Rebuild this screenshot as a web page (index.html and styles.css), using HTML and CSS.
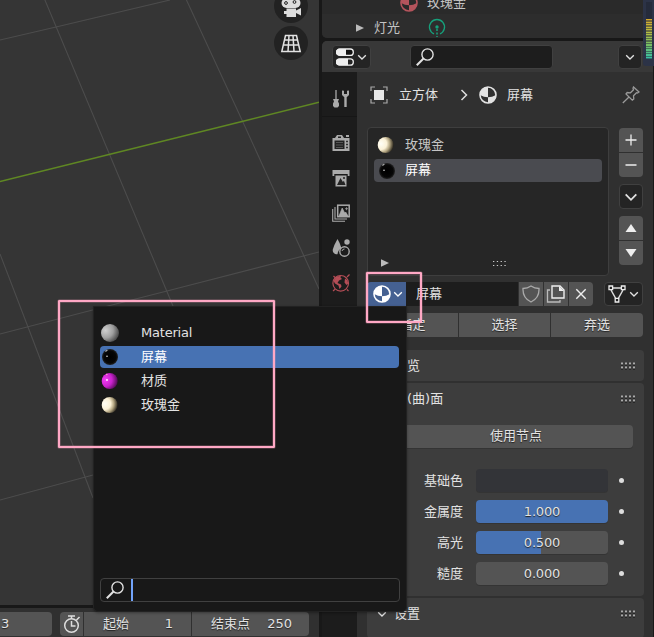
FILE: index.html
```html
<!DOCTYPE html>
<html lang="zh-CN">
<head>
<meta charset="utf-8">
<title>材质属性</title>
<link rel="stylesheet" href="styles.css">
</head>
<body>
<svg class="defs" aria-hidden="true">
  <defs>
    <radialGradient id="g-gold" cx=".2" cy=".42" r=".8"><stop offset="0" stop-color="#fffef6"/><stop offset=".45" stop-color="#fbf1d6"/><stop offset=".7" stop-color="#b3a581"/><stop offset="1" stop-color="#29251c"/></radialGradient>
    <radialGradient id="g-gray" cx=".25" cy=".35" r=".85"><stop offset="0" stop-color="#cfcfcf"/><stop offset=".5" stop-color="#a0a0a0"/><stop offset="1" stop-color="#333"/></radialGradient>
    <radialGradient id="g-pink" cx=".22" cy=".42" r=".85"><stop offset="0" stop-color="#f23df4"/><stop offset=".5" stop-color="#c922cd"/><stop offset="1" stop-color="#350638"/></radialGradient>
    <radialGradient id="g-black"><stop offset="0" stop-color="#000"/><stop offset=".75" stop-color="#060606"/><stop offset="1" stop-color="#222"/></radialGradient>
    <symbol id="gold" viewBox="0 0 18 18"><circle cx="8.700" cy="9" r="8" fill="url(#g-gold)"/></symbol>
    <symbol id="gray" viewBox="0 0 18 18"><circle cx="9" cy="9" r="9" fill="url(#g-gray)"/></symbol>
    <symbol id="pink" viewBox="0 0 18 18"><circle cx="8.700" cy="9" r="8" fill="url(#g-pink)"/><circle cx="6" cy="8" r=".9" fill="#fff"/><circle cx="5.800" cy="2.500" r=".8" fill="#f9c"/></symbol>
    <symbol id="black" viewBox="0 0 18 18"><circle cx="9" cy="9" r="8" fill="url(#g-black)"/><circle cx="6" cy="8.300" r=".8" fill="#ddd"/><path d="M4.400 3.400 6.400 2" stroke="#aaa" stroke-width="1.200"/></symbol>
    <symbol id="material" viewBox="0 0 18 18"><circle cx="9" cy="9" r="8" fill="none" stroke="currentColor" stroke-width="1.600"/><path d="M9 1a8 8 0 0 0-8 8q4 2.300 8 2.300zM9 11.300q4 0 8-2.300a8 8 0 0 1-8 8z" fill="currentColor"/></symbol>
    <symbol id="down" viewBox="0 0 10 10"><path d="m1.200 3.200 3.800 3.800 3.800-3.800" fill="none" stroke="currentColor" stroke-width="1.300"/></symbol>
    <symbol id="search" viewBox="0 0 18 18"><circle cx="11.500" cy="6.500" r="5.600" fill="none" stroke="currentColor" stroke-width="1.400"/><path d="M7.500 10.500.8 17.200" stroke="currentColor" stroke-width="2"/></symbol>
    <symbol id="grip" viewBox="0 0 16 8"><path d="M1 2.500h14M1 6.500h14" stroke="#111" stroke-width="2" stroke-dasharray="2 2"/><path d="M1 1.500h14M1 5.500h14" stroke="#aaa" stroke-width="2" stroke-dasharray="2 2"/></symbol>
    <symbol id="play" viewBox="0 0 8 8"><path d="M0 .3 8 4 0 7.700z" fill="#bbb"/></symbol>
  </defs>
</svg>

<div class="app">
  <main class="left">
    <section class="viewport">
      <svg class="scene" viewBox="0 0 319 605">
        <g stroke="#4c4c4c" stroke-width="1.100" fill="none">
          <path d="M44.500-1 173 306M186-1 242 120 319 289M0 254 28 327 93 498M0 40 56 27 170 0M0 500 93 475M0 334 108 306 167 291 319 252"/>
        </g>
        <path d="M0 181.500 110 154.300 242 121.500 319 102.300" stroke="#5f8723" stroke-width="1.500" fill="none"/>
      </svg>
      <div class="gizmos">
        <span class="gizmo"><svg width="22" height="26" viewBox="0 0 22 26"><rect x="1.500" y="5" width="19" height="10" rx="5" fill="#ddd"/><circle cx="6" cy="10" r="1.400" fill="#ddd" stroke="#222"/><circle cx="14.500" cy="9" r="1.400" fill="#ddd" stroke="#222"/><path d="M6.500 15.500h9.500v2l5-2.500v7.500L16 20v4H6.500v-3H4v-3h2.500z" fill="#ddd"/></svg></span>
        <span class="gizmo"><svg width="22" height="20" viewBox="0 0 22 20"><path d="M5.500 2.500h11l3.700 16H1.800zM4.500 7h13M3.300 12h15.400M9 2.500l-1 16M13 2.500l1 16" fill="none" stroke="#e2e2e2" stroke-width="1.500"/></svg></span>
      </div>
    </section>
    <footer class="timeline">
      <span class="num first">3</span>
      <div class="group">
        <span class="num clock"><svg width="18" height="20" viewBox="0 0 18 20"><circle cx="8.500" cy="11.500" r="6.800" fill="none" stroke="#ddd" stroke-width="1.500"/><path d="M5 2h7M8.500 2v3M13.500 6l3-3M8.500 7v5h4" fill="none" stroke="#ddd" stroke-width="1.500"/></svg></span>
        <span class="num start"><b>起始</b><b>1</b></span>
        <span class="num end"><b>结束点</b><b>250</b></span>
      </div>
    </footer>
  </main>

  <aside class="right">
    <section class="outliner">
      <div class="orow child"><svg width="18" height="18" class="red"><use href="#material"/></svg><span>玫瑰金</span></div>
      <div class="orow"><svg width="8" height="8"><use href="#play"/></svg><span class="light-name">灯光</span><svg width="18" height="20" viewBox="0 0 18 20"><path d="M6 15.900a7.500 7.500 0 1 1 6 0" fill="none" stroke="#16a07b" stroke-width="1.400"/><circle cx="9" cy="9" r="1.700" fill="#16a07b"/><path d="M9 11v8" stroke="#16a07b" stroke-width="1.500" stroke-dasharray="2 1.500"/></svg></div>
    </section>

    <section class="properties">
      <header class="pheader">
        <span class="dark editor"><svg width="18" height="18" viewBox="0 0 18 18"><rect x=".7" y="1" width="16.600" height="6.400" rx="3" fill="#111" stroke="#eee" stroke-width="1.300"/><path d="M3 1h7v6.400H3a3 3 0 0 1 0-6.400zM3 10.800h9v6.400H3a3 3 0 0 1 0-6.400z" fill="#eee"/><rect x=".7" y="10.800" width="16.600" height="6.400" rx="3" fill="none" stroke="#eee" stroke-width="1.300"/></svg><svg width="10" height="10"><use href="#down"/></svg></span>
        <span class="find"><svg width="18" height="18"><use href="#search"/></svg></span>
        <span class="dark options"><svg width="10" height="10"><use href="#down"/></svg></span>
      </header>
      <div class="pbody">
        <nav class="tabs">
          <span class="tab tool"><svg width="18" height="20" viewBox="0 0 18 20"><path d="M4 1v9" stroke="#aaa" stroke-width="1.300"/><path d="M1 10h6l-1 2.500 1 2v2.500l-1.500 1.500h-3L1 17v-2.500l1-2z" fill="#aaa"/><path d="M12.300 18V8.300L10 6V1.500l2 .3V5h3V1.800l2-.3V6l-2.300 2.300V18z" fill="#aaa"/></svg></span>
          <span class="tab"><svg width="18" height="18" viewBox="0 0 18 18"><path d="M3 4 5 1h5l2 3h5.500v13H.5V4z" fill="#aaa"/><path d="M2.500 6.500h10v8.500h-10zM6 2.500h3V4H6z" fill="#222"/><path d="M4 8.500h7M4 11h7M4 13.500h7" stroke="#555"/><path d="M14 7.500h2M14 10.500h2M14 13.500h2" stroke="#333" stroke-width="1.500"/><path d="M14 2h3" stroke="#aaa" stroke-width="2"/></svg></span>
          <span class="tab"><svg width="18" height="18" viewBox="0 0 18 18"><path d="M.5 1h17v6h-1.800V5H2.300v2H.5zM3.500 6.500h11v11h-11z" fill="#aaa"/><path d="m5 16 3.500-7 2.400 4 1-1.300L13.500 16z" fill="#242424"/><circle cx="12" cy="9" r="1" fill="#242424"/></svg></span>
          <span class="tab"><svg width="18" height="18" viewBox="0 0 18 18"><path d="M.7 5v12.300H13M3 3v12h12" fill="none" stroke="#aaa" stroke-width="1.100"/><rect x="5.700" y="1.200" width="11.500" height="11.500" fill="none" stroke="#aaa" stroke-width="1.500"/><path d="m7 12 3.200-8 2.500 5 1-1L16 12zM13 4.700h3M14.500 3.200v3" fill="#aaa" stroke="#aaa" stroke-width=".7"/></svg></span>
          <span class="tab"><svg width="18" height="18" viewBox="0 0 18 18"><path d="M5.500 0Q2 6 .8 10.500c-.5 3 2 5 4.700 4.700.3-3 1.700-5 4-6Q8 4 5.500 0z" fill="#aaa"/><circle cx="15" cy="3" r="2.700" fill="#aaa"/><circle cx="12.500" cy="12.500" r="4.700" fill="none" stroke="#aaa" stroke-width="1.400"/><path d="M10 12a2.500 2.500 0 0 1 2.500-2" fill="none" stroke="#aaa"/></svg></span>
          <span class="tab"><svg width="18" height="18" viewBox="0 0 18 18"><circle cx="8.700" cy="9.300" r="7.800" fill="none" stroke="#b44d56" stroke-width="1.200"/><path d="M1.500 7 4 3l5-1.500-.5 2L10 5 7 6.500 5.500 9 9 10.500l.5 2-2 2.500-1-3.500L3 9.500zM13 4.500l2.500 2 .7 3-1.700 1.500-2-2.500z" fill="#b44d56"/><path d="m15 3 2.500-2.500M1 17l2-1.800M15 15.500l1.500 1.500M1.500 2l1.500 1.500" stroke="#b44d56" stroke-width="1.200"/></svg></span>
        </nav>

        <div class="content">
          <div class="crumbs">
            <svg width="18" height="18" viewBox="0 0 18 18"><rect x="4" y="4" width="10" height="10" fill="#e8e8e8"/><path d="M1 5V1h4M13 1h4v4M17 13v4h-4M5 17H1v-4" fill="none" stroke="#aaa" stroke-width="1.200"/></svg>
            <span class="object">立方体</span>
            <svg width="8" height="14" viewBox="0 0 8 14"><path d="m1.500 2 5 5-5 5" fill="none" stroke="#ddd" stroke-width="1.500"/></svg>
            <svg class="mat" width="18" height="18"><use href="#material"/></svg>
            <span>屏幕</span>
            <svg class="pin" width="18" height="18" viewBox="0 0 18 18"><path d="m11.500 1 5.500 5-1.500 1-1-.3-3 3 .3 3.300-1.500 1.200L4 8l1.200-1.500 3.300.3 3-3-.5-1.500zM7 11 .8 17" fill="none" stroke="#999" stroke-width="1.300"/></svg>
          </div>

          <div class="slots">
            <div class="list">
              <div class="slot"><svg width="18" height="18"><use href="#gold"/></svg><span>玫瑰金</span></div>
              <div class="slot selected"><svg width="18" height="18"><use href="#black"/></svg><span>屏幕</span></div>
              <div class="listfoot"><svg width="8" height="8"><use href="#play"/></svg><svg width="13" height="7" viewBox="0 0 13 7"><path d="M0 1.500h14M0 5.500h14" stroke="#ccc" stroke-width="1.200" stroke-dasharray="1.300 2.500"/></svg></div>
            </div>
            <div class="sidebtns">
              <div class="stack"><span><svg width="14" height="14" viewBox="0 0 14 14"><path d="M1.500 7h11M7 1.500v11" stroke="#eee" stroke-width="1.300"/></svg></span><span><svg width="14" height="14" viewBox="0 0 14 14"><path d="M1.500 7h11" stroke="#eee" stroke-width="1.300"/></svg></span></div>
              <span class="dark more"><svg width="14" height="14"><use href="#down"/></svg></span>
              <div class="stack"><span><svg width="12" height="8" viewBox="0 0 12 8"><path d="m6 0 5.500 8H.5z" fill="#eee"/></svg></span><span><svg width="12" height="8" viewBox="0 0 12 8"><path d="m6 8 5.500-8H.5z" fill="#eee"/></svg></span></div>
            </div>
          </div>

          <div class="datablock">
            <span class="browse"><svg width="18" height="18"><use href="#material"/></svg><svg width="10" height="10"><use href="#down"/></svg></span>
            <span class="name">屏幕</span>
            <span class="act"><svg width="18" height="18" viewBox="0 0 18 18"><path d="M9 1q3.500 2.500 8 2.500Q17.500 13 9 17 .5 13 1 3.500 5.500 3.500 9 1z" fill="none" stroke="#aaa" stroke-width="1.300"/></svg></span>
            <span class="act"><svg width="20" height="18" viewBox="0 0 20 18"><path d="M6 1h8l4 4v8H6z" fill="none" stroke="#eee" stroke-width="1.400"/><path d="M13 1v5h5z" fill="#eee"/><path d="M4 5H1.500v12H14v-2" fill="none" stroke="#bbb" stroke-width="1.300"/></svg></span>
            <span class="act last"><svg width="12" height="12" viewBox="0 0 12 12"><path d="m1.300 1.300 9.400 9.400M10.700 1.300l-9.400 9.400" stroke="#eee" stroke-width="1.400"/></svg></span>
            <span class="dark link"><svg width="18" height="18" viewBox="0 0 18 18"><path d="M4 3h10M3 5l5 9M15 5l-5 9" stroke="#ddd" stroke-width="1.500"/><path d="M1 1h3.600v3.600H1zM13.400 1H17v3.600h-3.600zM7.200 13.400h3.600V17H7.200z" fill="#222" stroke="#eee" stroke-width="1.300"/></svg><svg width="10" height="10"><use href="#down"/></svg></span>
          </div>

          <div class="assign"><span>指定</span><span>选择</span><span>弃选</span></div>

          <section class="panel preview"><header><svg width="10" height="10"><use href="#down"/></svg><span>预览</span><svg class="grip" width="16" height="8"><use href="#grip"/></svg></header></section>
          <section class="panel surface">
            <header><svg width="10" height="10"><use href="#down"/></svg><span>表(曲)面</span><svg class="grip" width="16" height="8"><use href="#grip"/></svg></header>
            <div class="nodes">使用节点</div>
            <div class="prop"><label>基础色</label><span class="field color"></span><i></i></div>
            <div class="prop"><label>金属度</label><span class="field full">1.000</span><i></i></div>
            <div class="prop"><label>高光</label><span class="field half">0.500</span><i></i></div>
            <div class="prop"><label>糙度</label><span class="field">0.000</span><i></i></div>
          </section>
          <section class="panel settings"><header><svg width="10" height="10"><use href="#down"/></svg><span>设置</span><svg class="grip" width="16" height="8"><use href="#grip"/></svg></header></section>
        </div>
      </div>
    </section>
  </aside>
</div>

<div class="popup">
  <div class="item"><svg width="18" height="18"><use href="#gray"/></svg><span class="latin">Material</span></div>
  <div class="item active"><svg width="18" height="18"><use href="#black"/></svg><span>屏幕</span></div>
  <div class="item"><svg width="18" height="18"><use href="#pink"/></svg><span>材质</span></div>
  <div class="item"><svg width="18" height="18"><use href="#gold"/></svg><span>玫瑰金</span></div>
  <div class="query"><svg width="18" height="18"><use href="#search"/></svg><span class="caret"></span></div>
</div>
<div class="mark mark-list"></div>
<div class="mark mark-button"></div>
<div class="meter"><span></span></div>
</body>
</html>
```
FILE: styles.css
```css
* { box-sizing: border-box; }
body {
  margin: 0; width: 654px; height: 637px; overflow: hidden; position: relative;
  background: #181818; color: #e2e2e2;
  font: 13px/20px "DejaVu Sans", "Noto Sans CJK SC", sans-serif;
}
svg { display: block; flex: none; }
span, b, label { white-space: nowrap; font-weight: normal; }
.defs { position: absolute; width: 0; height: 0; }
.app { display: grid; grid-template-columns: 319px 331px; gap: 3px; height: 637px; }
.left { display: grid; grid-template-rows: 605px 29px; gap: 3px; min-width: 0; }

.viewport { position: relative; background: #353535; overflow: hidden; }
.scene { width: 319px; height: 605px; }
.gizmos { position: absolute; left: 274px; top: -11px; display: flex; flex-direction: column; gap: 3px; }
.gizmo { width: 34px; height: 34px; border-radius: 50%; background: #222; display: flex; align-items: center; justify-content: center; }

.timeline { background: #303030; display: flex; gap: 8px; padding-top: 4px; overflow: hidden; }
.num { height: 24px; background: #545454; display: flex; align-items: center; text-shadow: 0 1px 1px #222; }
.first { width: 52px; border-radius: 0 4px 4px 0; padding-left: 1px; }
.group { display: flex; gap: 1px; }
.clock { width: 23px; border-radius: 4px 0 0 4px; justify-content: center; }
.start { width: 107px; justify-content: space-between; padding: 0 18px 0 19px; }
.end { width: 117px; justify-content: space-between; padding: 0 17px 0 19px; border-radius: 0 4px 4px 0; }

.right { display: grid; grid-template-rows: 38px 596px; gap: 3px; min-width: 0; }
.outliner { background: #2a2a2a; border-radius: 0 0 0 5px; overflow: hidden; color: #c4c4c4; display: flex; flex-direction: column; justify-content: flex-end; }
.orow { height: 24px; flex: none; display: flex; align-items: center; padding-left: 34px; background: #2d2d2d; }
.orow.child { padding-left: 78px; gap: 9px; background: #2a2a2a; padding-bottom: 0; height: 22px; }
.orow.child svg { margin-top: -1px; }
.orow:last-child { padding-top: 3px; }
.light-name { margin: 0 28px 0 10px; }
.red { color: #b4545c; }

.properties { background: #303030; border-radius: 5px 0 0; overflow: hidden; }
.pheader { height: 31px; background: #383838; display: flex; padding: 4px 11px 0 11px; }
.dark { background: #242424; border: 1px solid #404040; border-radius: 4px; display: flex; align-items: center; justify-content: center; }
.editor { width: 39px; height: 24px; gap: 3px; margin-left: -1px; }
.find { margin-left: 39px; width: 143px; height: 24px; background: #1d1d1d; border: 1px solid #404040; border-radius: 4px; padding: 2px 5px; }
.options { margin-left: auto; width: 24px; height: 24px; }
.pbody { display: grid; grid-template-columns: 35px 296px; height: 565px; }
.tabs { background: #1c1c1c; padding-top: 10px; }
.tab { height: 35px; padding-left: 2px; display: flex; align-items: center; justify-content: center; }
.tool { border-bottom: 1px solid #161616; margin-bottom: 8px; }

.content { padding-left: 10px; }
.crumbs { height: 55px; padding: 0 13px 10px 3px; display: flex; align-items: center; }
.crumbs .object { margin: 0 22px 0 11px; }
.crumbs .mat { margin: 0 10px 0 11px; }
.crumbs .pin { margin-left: auto; }
.slots { display: flex; gap: 10px; height: 149px; }
.list { width: 242px; background: #262626; border: 1px solid #3e3e3e; border-radius: 4px; padding: 4px 6px 7px; display: flex; flex-direction: column; }
.slot { height: 25px; display: flex; align-items: center; padding-left: 3px; gap: 10px; color: #c4c4c4; }
.slot.selected { height: 23px; margin-top: 2px; background: #4a4b50; border-radius: 4px; color: #fff; padding-left: 4px; }
.selected span { margin-left: -1px; padding-bottom: 1px; }
.listfoot { margin-top: auto; height: 10px; display: grid; grid-template-columns: 119px 1fr; align-items: center; padding-left: 7px; }
.listfoot svg:last-child { margin-left: -7px; }
.sidebtns { width: 24px; display: flex; flex-direction: column; gap: 7px; padding-top: 1px; }
.stack { display: flex; flex-direction: column; gap: 1px; }
.stack span { height: 24px; background: #545454; display: flex; align-items: center; justify-content: center; }
.stack span:first-child { border-radius: 4px 4px 0 0; }
.stack span:last-child { border-radius: 0 0 4px 4px; }
.more { height: 25px; }

.datablock { margin-top: 6px; display: flex; height: 24px; }
.browse { width: 39px; background: #456192; display: flex; align-items: center; gap: 2px; padding-left: 6px; color: #fff; border-radius: 4px 0 0; }
.name { width: 112px; background: #1d1d1d; padding: 2px 0 0 10px; }
.act { width: 24px; margin-left: 1px; background: #545454; display: flex; align-items: center; justify-content: center; }
.last { border-radius: 0 4px 4px 0; }
.link { width: 39px; margin-left: 11px; gap: 3px; }
.assign { margin-top: 7px; display: grid; grid-template-columns: 91px 91px 92px; gap: 1px; height: 24px; }
.assign span { background: #545454; text-align: center; line-height: 24px; text-shadow: 0 1px 1px #222; }
.assign span:last-child { border-radius: 0 4px 4px 0; }

.panel { width: 277px; background: #3d3d3d; border-radius: 4px; }
.panel header { height: 31px; display: flex; align-items: center; gap: 7px; padding: 0 8px 0 10px; }
.grip { margin-left: auto; }
.preview { margin-top: 13px; }
.surface { margin-top: 2px; height: 213px; }
.nodes { margin: 11px 11px 21px 32px; height: 23px; line-height: 22px; background: #545454; border-radius: 4px; text-align: center; text-shadow: 0 1px 1px #222; box-shadow: 0 1px #343434; }
.prop { display: grid; grid-template-columns: 96px 13px 132px 11px 5px; align-items: center; height: 23px; margin-bottom: 8px; }
.prop label { text-align: right; }
.field { grid-column: 3; height: 23px; line-height: 23px; text-align: center; border-radius: 4px; background: #545454; letter-spacing: -.15px; text-shadow: 0 1px 1px #222; box-shadow: 0 1px #343434; }
.field.color { background: #333438; }
.field.full { background: #4772b3; }
.field.half { background: linear-gradient(90deg, #4772b3 49.3%, #545454 49.3%); }
.prop i { grid-column: 5; width: 5px; height: 5px; border-radius: 50%; background: #ddd; }
.settings { margin-top: 2px; height: 40px; }

.popup { position: absolute; left: 93px; top: 306px; width: 314px; height: 306px; background: #181818; border: 1px solid #222; border-radius: 0 0 5px 5px; padding: 15px 6px 9px; display: flex; flex-direction: column; gap: 2px; box-shadow: 0 1px 3px #0005; }
.item { width: 299px; height: 22px; display: flex; align-items: center; gap: 22px; padding-left: 1px; }
.item span { padding-bottom: 1px; }
.item .latin { letter-spacing: -.2px; }
.active { background: #4772b3; border-radius: 4px; color: #fff; }
.query { margin-top: auto; width: 300px; height: 24px; border: 1px solid #404040; border-radius: 4px; display: flex; align-items: center; gap: 7px; padding-left: 5px; }
.caret { width: 2px; height: 22px; background: #71a3fa; }

.mark { position: absolute; border: 2px solid #ffa8c5; border-radius: 1px; box-shadow: 0 0 0 .5px #ffa8c566, inset 0 0 0 .5px #ffa8c566; }
.mark-list { left: 58px; top: 300px; width: 217px; height: 148px; }
.mark-button { left: 366px; top: 272px; width: 56px; height: 51px; }
.meter { position: absolute; left: 643px; top: 0; width: 11px; height: 66px; padding: 2px 2px 0 3px; background: #2c3347; border-radius: 0 0 0 3px; }
.meter span { display: block; height: 57px; background: repeating-linear-gradient(transparent 0 1px, #252b3b88 1px 2.500px), linear-gradient(#252b3b 0 17px, #d6a82d 17px, #b8bd42 30px, #6fbd68 44px, #34bfa9 57px); }
```
